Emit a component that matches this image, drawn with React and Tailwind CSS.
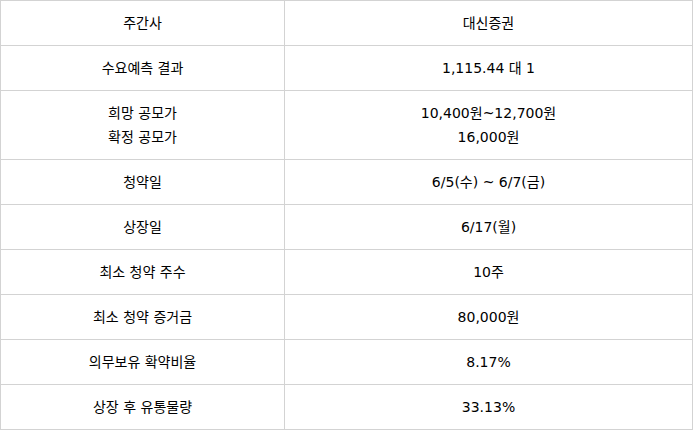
const ROWS = [
  ['주간사', ['대신증권']],
  ['수요예측 결과', ['1,115.44 대 1']],
  [['희망 공모가', '확정 공모가'], ['10,400원~12,700원', '16,000원']],
  ['청약일', ['6/5(수) ~ 6/7(금)']],
  ['상장일', ['6/17(월)']],
  ['최소 청약 주수', ['10주']],
  ['최소 청약 증거금', ['80,000원']],
  ['의무보유 확약비율', ['8.17%']],
  ['상장 후 유통물량', ['33.13%']],
]

function Lines({ items }) {
  const list = Array.isArray(items) ? items : [items]
  return list.map((t, i) => <div key={i}>{t}</div>)
}

export default function App() {
  return (
    <div className="bg-white w-[693px] h-[430px]" style={{ fontFamily: '"DejaVu Sans", "Noto Sans CJK KR", sans-serif' }}>
      <table className="w-[693px] border-collapse table-fixed text-[14px] leading-[24px] text-black">
        <colgroup>
          <col className="w-[284px]" />
          <col />
        </colgroup>
        <tbody>
          {ROWS.map(([label, value], i) => (
            <tr key={i}>
              <td className="border border-[#d3d3d3] py-[10px] text-center align-middle">
                <Lines items={label} />
              </td>
              <td className="border border-[#d3d3d3] py-[10px] text-center align-middle">
                <Lines items={value} />
              </td>
            </tr>
          ))}
        </tbody>
      </table>
    </div>
  )
}
